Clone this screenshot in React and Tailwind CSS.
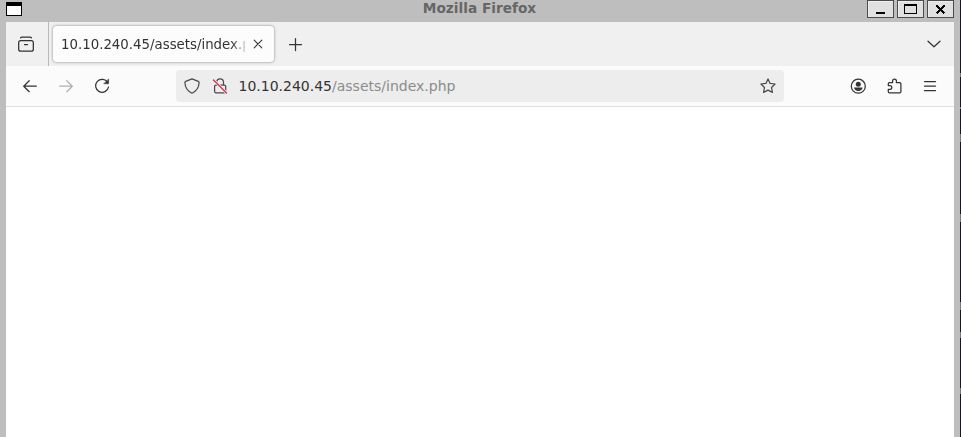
import React from "react";

function Icon({ children, className = "" }) {
  return (
    <svg
      viewBox="0 0 16 16"
      className={`block h-4 w-4 shrink-0 ${className}`}
      fill="none"
      stroke="currentColor"
      strokeWidth="1.25"
      strokeLinecap="round"
      strokeLinejoin="round"
    >
      {children}
    </svg>
  );
}

function WindowButton({ children }) {
  return (
    <div className="h-[18px] w-[27px] border border-[#4c4c4c] bg-[#e0e0e0] shadow-[inset_1px_1px_0_#eeeeee]">
      <svg viewBox="0 0 25 16" className="block h-4 w-[25px]" fill="none" stroke="#000" shapeRendering="crispEdges">
        {children}
      </svg>
    </div>
  );
}

function TitleBar() {
  return (
    <header className="flex h-[22px] shrink-0 items-start pl-1.5">
      <div className="mt-0.5 h-3.5 w-4 border border-t-4 border-black bg-white" />
      <h1 className="h-[18px] flex-1 pl-[70px] text-center text-[13.7px] leading-4 font-bold text-[#666666]">
        Mozilla Firefox
      </h1>
      <div className="flex gap-[3px] pr-1.5">
        <WindowButton>
          <path d="M8 12h9" strokeWidth="2" />
        </WindowButton>
        <WindowButton>
          <path d="M6 4h13" strokeWidth="2" />
          <path d="M6.5 4v8.5h12V4" />
        </WindowButton>
        <WindowButton>
          <path d="M8.5 4.5l8 8M16.5 4.5l-8 8" strokeWidth="2.2" />
        </WindowButton>
      </div>
    </header>
  );
}

function TabStrip() {
  return (
    <div className="flex h-11 shrink-0 items-center bg-[#f0f0f0]">
      <div className="flex h-full w-[43px] items-center border-r border-[#b9b9b9] pl-3">
        <Icon>
          <path d="M2.7 4.6h10.6c1.1 0 2 .8 2 1.900v6.700c0 1.100-.9 2-2 2H2.700c-1.100 0-2-.9-2-2V6.500c0-1.100.9-1.900 2-1.900zM6.500 8.500h3" />
          <path d="M2.600 1.900c.3-.5.700-.7 1.300-.7h8.200c.6 0 1 .2 1.300.7" />
        </Icon>
      </div>
      <div className="ml-[4px] flex h-9 w-[221px] items-center rounded bg-[#fcfcfc] pl-2 shadow-[0_0_3px_rgba(0,0,0,0.45)]">
        <span className="w-[184px] overflow-hidden pt-px whitespace-nowrap text-[13.33px] text-[#333333] [mask-image:linear-gradient(to_right,black_170px,transparent_188px)]">
          10.10.240.45/assets/index.php
        </span>
        <Icon className="ml-[5px]">
          <path d="M4.2 4.2l7.6 7.6M11.8 4.2l-7.6 7.6" strokeWidth="1.1" />
        </Icon>
      </div>
      <Icon className="ml-[14px]">
        <path d="M7.5 2.5v12M1.5 8.500h12" />
      </Icon>
      <Icon className="mr-3 ml-auto">
        <path d="M2 5.200l6 5.600 6-5.600" />
      </Icon>
    </div>
  );
}

function AddressBar() {
  return (
    <div className="ml-[66px] flex h-8 w-[608px] items-center rounded bg-[#ededed] px-2">
      <Icon className="text-[#4b4b4b]">
        <path d="M8 .9l6.3 2.4c.5.2.8.5.8 1C15 8.600 13.300 12.800 8 15.200 2.700 12.800 1 8.600.9 4.300c0-.5.3-.8.8-1z" />
      </Icon>
      <Icon className="ml-3 text-[#4b4b4b]">
        <path d="M4.700 7V4.200a3.400 3.400 0 0 1 6.800 0V7M4 7h8.300c.8 0 1.400.6 1.400 1.400v5c0 .8-.6 1.400-1.400 1.400H4c-.8 0-1.400-.6-1.400-1.400v-5C2.600 7.600 3.200 7 4 7z" />
        <path d="M1.500 2l13 13" stroke="#ededed" strokeWidth="2.700" />
        <path d="M1.500 2l13 13" stroke="#e22850" />
      </Icon>
      <span className="ml-[10.5px] text-sm whitespace-nowrap text-[#8c8c8c]">
        <span className="text-[#333333]">10.10.240.45</span>/assets/index.php
      </span>
      <Icon className="ml-auto text-[#4b4b4b]">
        <path d="M8 .9l2.100 4.500 5 .6-3.600 3.500.9 4.900L8 12.100l-4.400 2.300.9-4.900L.9 6l5-.6z" />
      </Icon>
    </div>
  );
}

function Toolbar() {
  return (
    <div className="flex h-[41px] shrink-0 items-center border-b border-[#dedede] bg-[#fbfbfb] pl-4">
      <Icon>
        <path d="M14.300 8.200H1.700M7.200 2.700L1.700 8.200l5.500 5.500" />
      </Icon>
      <Icon className="ml-5 text-[#b0b0b0]">
        <path d="M1.700 8.200h12.600M8.800 2.700l5.500 5.500-5.500 5.500" />
      </Icon>
      <Icon className="ml-5">
        <path d="M13.700 4.500A6.500 6.500 0 1 0 14.500 9" />
        <path d="M14.600 1.200v4.600H10z" fill="currentColor" strokeWidth=".5" />
      </Icon>
      <AddressBar />
      <Icon className="ml-[66px]">
        <circle cx="8.300" cy="8.200" r="7" />
        <circle cx="8.300" cy="6.200" r="2.500" fill="currentColor" stroke="none" />
        <path d="M4 9.600h8.600c-.3 2.200-2 3.500-4.300 3.500S4.300 11.800 4 9.600z" fill="currentColor" stroke="none" />
      </Icon>
      <Icon className="ml-[21px]">
        <path d="M5.600 4.500V2.900a1.900 1.900 0 0 1 3.800 0v1.600h3.300c.7 0 1.200.5 1.200 1.200v8c0 .7-.5 1.200-1.200 1.200H2.500c-.7 0-1.200-.5-1.200-1.200v-2.300h1.600a1.900 1.900 0 0 0 0-3.800H1.300V5.700c0-.7.5-1.200 1.200-1.200z" />
      </Icon>
      <Icon className="ml-[19px]">
        <path d="M2.500 3.500h11M2.500 8h11M2.500 12.500h11" />
      </Icon>
    </div>
  );
}

export default function App() {
  return (
    <div className="flex h-[437px] w-[961px] overflow-hidden bg-[#bebebe] font-['DejaVu_Sans',sans-serif] text-[#333333]">
      <div className="flex w-[960px] shrink-0 flex-col">
        <TitleBar />
        <main className="mr-1.5 ml-1.5 flex flex-1 flex-col bg-white">
          <TabStrip />
          <Toolbar />
        </main>
      </div>
      <div className="flex w-px flex-col bg-[#171727]">
        <div className="mt-[73px] h-1 bg-[#77777f]" />
        <div className="mt-[30px] h-0.5 bg-[#77777f]" />
        <div className="mt-[25px] h-2 bg-[#77777f]" />
        <div className="mt-[72px] h-2 bg-[#77777f]" />
        <div className="mt-[80px] h-2 bg-[#77777f]" />
        <div className="mt-[22px] h-1.5 bg-[#77777f]" />
        <div className="mt-[50px] h-1.5 bg-[#77777f]" />
      </div>
    </div>
  );
}
